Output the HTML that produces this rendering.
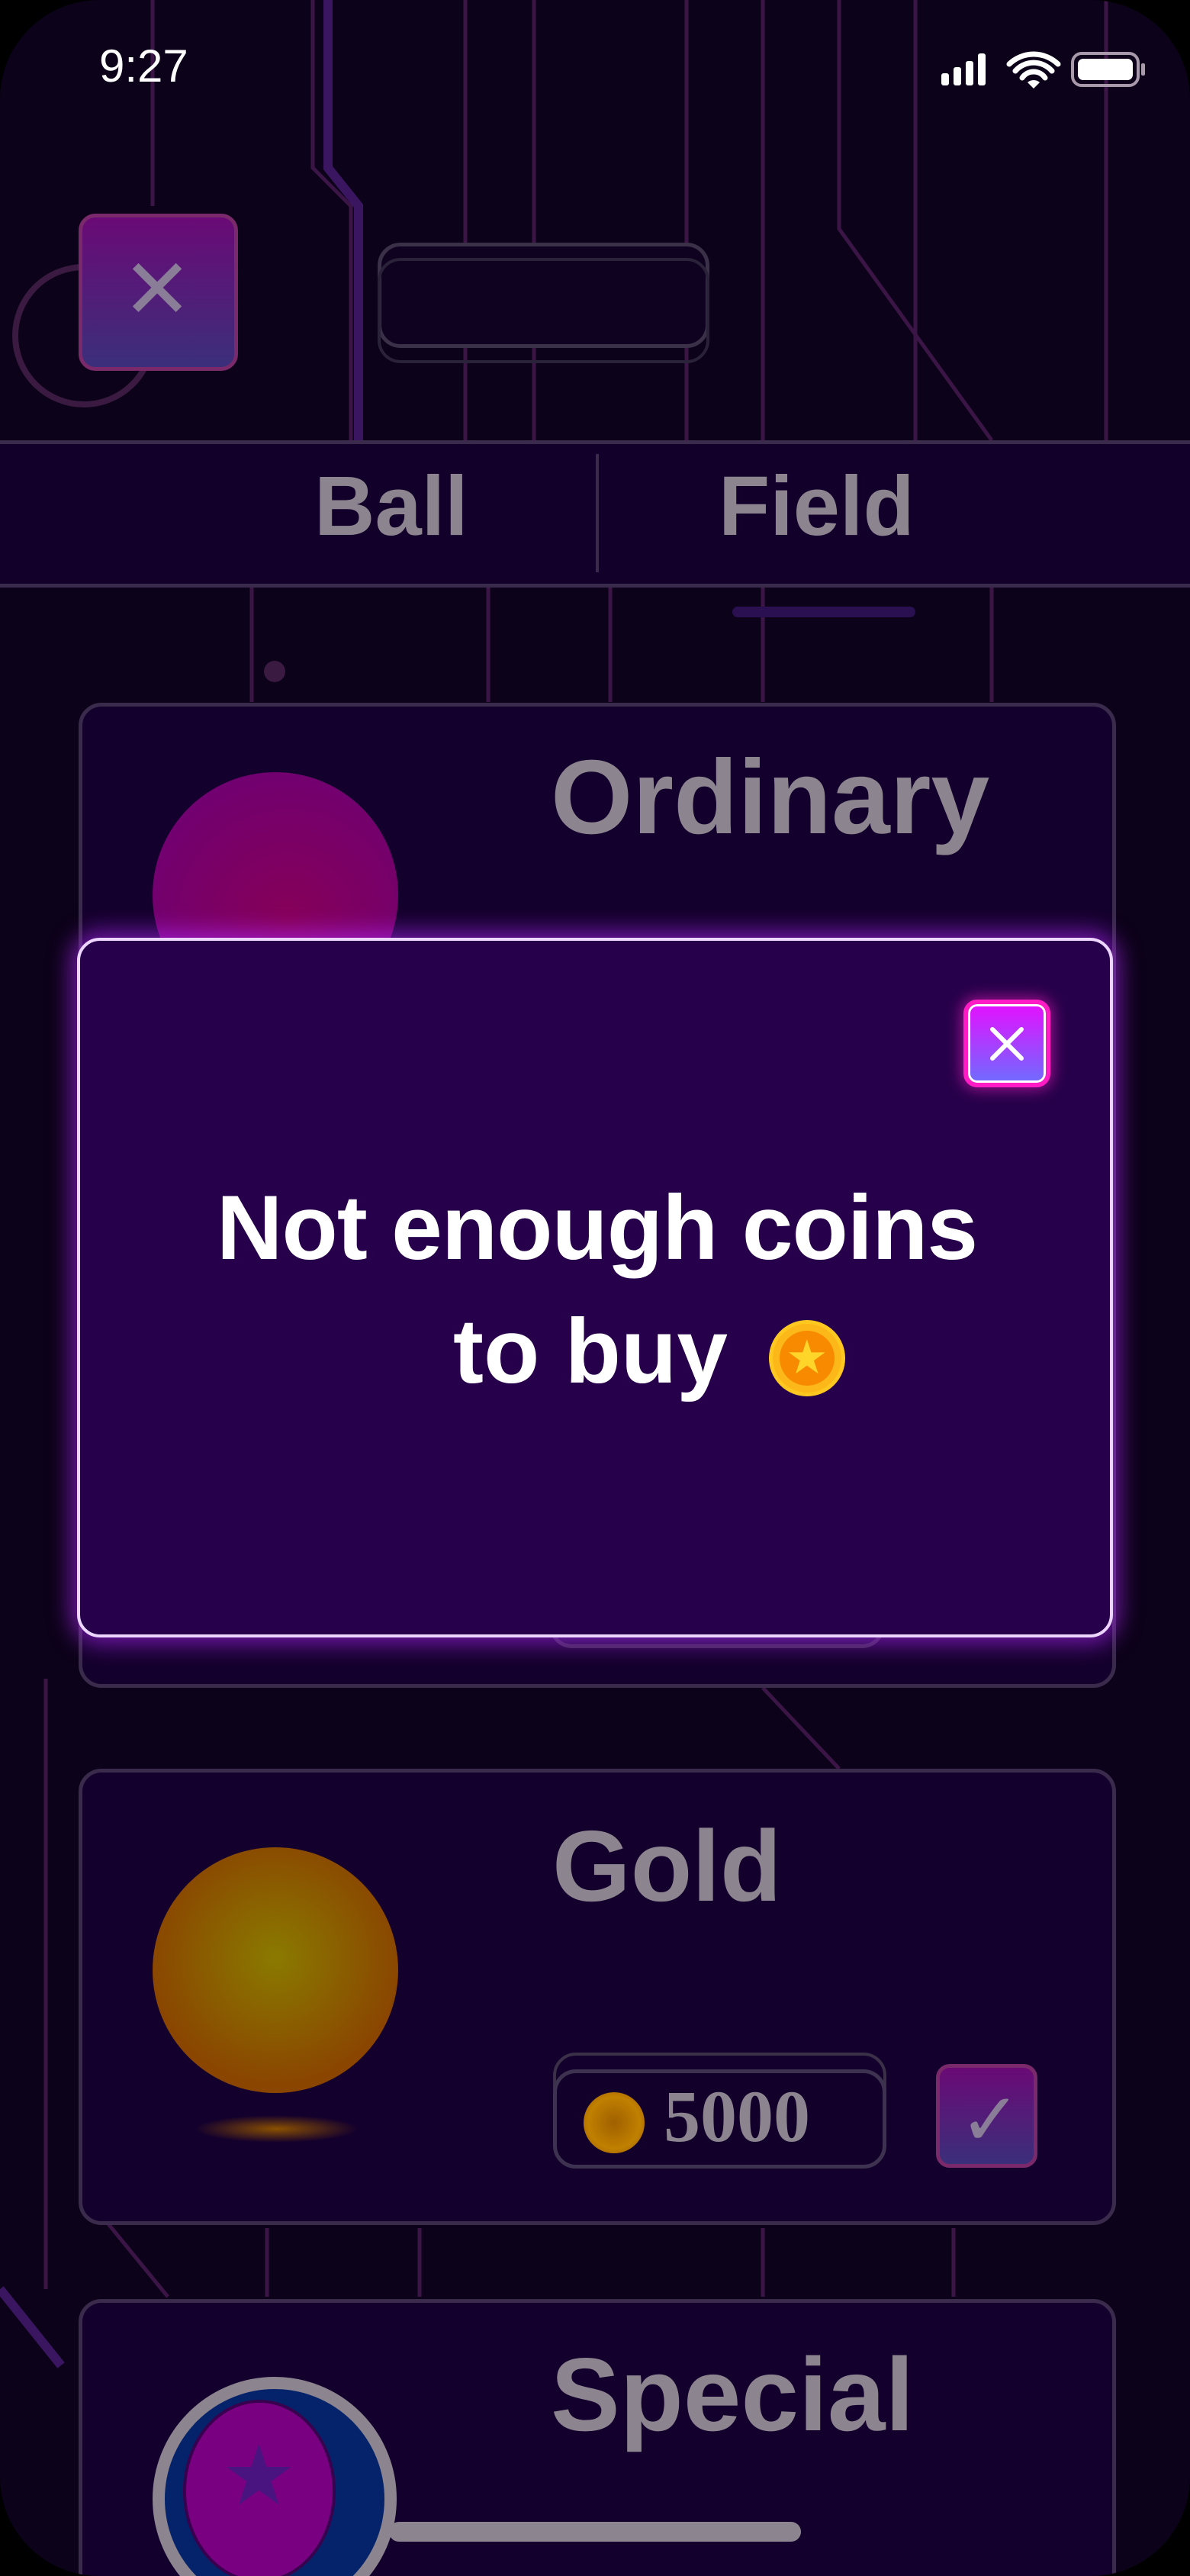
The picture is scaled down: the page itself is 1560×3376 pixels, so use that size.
<!DOCTYPE html>
<html><head><meta charset="utf-8"><style>
*{margin:0;padding:0;box-sizing:border-box}
html,body{width:1560px;height:3376px;background:#000;overflow:hidden;font-family:"Liberation Sans",sans-serif}
.scr{position:absolute;left:0;top:0;width:1560px;height:3376px;border-radius:130px;overflow:hidden;background:#0c0219}
.abs{position:absolute}
.card{position:absolute;left:103px;width:1360px;border:5px solid #3a2a4c;border-radius:30px;background:#14002c}
.gt{position:absolute;color:#8c8590;font-weight:bold;font-size:132px}
</style></head><body>
<div class="scr">
<svg class="abs" style="left:0;top:0" width="1560" height="3376">
<g fill="none" stroke="#3a1545" stroke-width="5">
<path d="M200 0V270M410 0V220L460 270V577M610 0V577M700 0V577M900 0V577M1000 0V577M1100 0V300L1300 577M1200 0V577M1450 0V577"/>
<path d="M330 770V920M640 770V920M800 770V920M1000 770V920M1300 770V920"/>
<path d="M60 2200V3000M130 2900L220 3010M350 2920V3010M550 2920V3010M1000 2920V3010M1250 2920V3010"/>
<path d="M1000 2212L1100 2318"/>
</g>
<g fill="none" stroke="#3b1660" stroke-width="12"><path d="M430 0V220L470 270V577"/><path d="M0 3000L80 3100"/></g>
<circle cx="110" cy="440" r="90" fill="none" stroke="#3a1a40" stroke-width="8"/>
<circle cx="1240" cy="1060" r="14" fill="#3a1a40"/><circle cx="360" cy="880" r="14" fill="#3a1a40"/>
<rect x="960" y="795" width="240" height="14" rx="7" fill="#2a1050"/>
</svg>
<div class="abs" style="left:0;top:577px;width:1560px;height:193px;background:#13002a;border-top:5px solid #3a2a4c;border-bottom:5px solid #3a2a4c"></div>
<div class="abs" style="left:781px;top:595px;width:4px;height:155px;background:#3a2a4c"></div>
<div class="gt" style="left:412px;top:600px;font-size:110px">Ball</div>
<div class="gt" style="left:942px;top:600px;font-size:110px">Field</div>
<div class="abs" style="left:103px;top:280px;width:209px;height:206px;border-radius:22px;border:5px solid #7a2a6a;background:linear-gradient(#6a0a76,#3b2f7a)"></div>
<div class="abs" style="left:160px;top:325px;color:#8a7d98;font-size:110px;line-height:110px">✕</div>
<div class="abs" style="left:495px;top:318px;width:435px;height:138px;border-radius:30px;border:5px solid #3a3048;background:#0f0120"></div>
<div class="abs" style="left:495px;top:338px;width:435px;height:138px;border-radius:30px;border:4px solid #2a2238"></div>
<div class="card" style="top:921px;height:1291px"></div>
<div class="gt" style="left:722px;top:966px;font-size:138px">Ordinary</div>
<div class="abs" style="left:200px;top:1012px;width:322px;height:322px;border-radius:50%;background:radial-gradient(circle at 55% 60%,#860058,#6a0078)"></div>
<div class="abs" style="left:720px;top:2100px;width:440px;height:60px;border-radius:30px;background:#1c0a3a;border:5px solid #3a2a4c"></div>
<div class="card" style="top:2318px;height:598px"></div>
<div class="gt" style="left:724px;top:2370px">Gold</div>
<div class="abs" style="left:200px;top:2421px;width:322px;height:322px;border-radius:50%;background:radial-gradient(circle at 50% 45%,#8a7a00,#8a4500 70%)"></div>
<div class="abs" style="left:255px;top:2772px;width:215px;height:36px;border-radius:50%;background:radial-gradient(#8a5000,rgba(138,80,0,0) 70%)"></div>
<div class="abs" style="left:725px;top:2690px;width:437px;height:134px;border-radius:30px;border:4px solid #3a3048"></div>
<div class="abs" style="left:725px;top:2712px;width:437px;height:130px;border-radius:30px;border:5px solid #3d3350;background:#13002a"></div>
<div class="abs" style="left:765px;top:2742px;width:80px;height:80px;border-radius:50%;background:radial-gradient(#a06000,#c08000 60%,#9a5a00)"></div>
<div class="abs" style="left:870px;top:2718px;color:#8c8590;font-weight:bold;font-size:96px;font-family:'Liberation Serif',serif">5000</div>
<div class="abs" style="left:1227px;top:2705px;width:133px;height:136px;border-radius:18px;border:5px solid #7a2a6a;background:linear-gradient(#6a0a76,#3b2f7a)"></div>
<div class="abs" style="left:1258px;top:2722px;color:#8a7d98;font-size:96px">✓</div>
<div class="card" style="top:3013px;height:500px"></div>
<div class="gt" style="left:722px;top:3060px;font-size:136px">Special</div>
<div class="abs" style="left:200px;top:3115px;width:320px;height:320px;border-radius:50%;border:16px solid #8c8590;background:#05236a"></div>
<div class="abs" style="left:240px;top:3145px;width:200px;height:240px;border-radius:50%;background:#7a0082;border:4px solid #3a0050"></div>
<div class="abs" style="left:290px;top:3180px;color:#4a1480;font-size:110px">★</div>
<div class="abs" style="left:510px;top:3305px;width:540px;height:26px;border-radius:13px;background:#8c8590"></div>

<!-- modal -->
<div class="abs" style="left:101px;top:1229px;width:1358px;height:917px;border-radius:30px;background:#26004a;border:4px solid #ecd6ff;box-shadow:0 0 30px 8px rgba(180,40,255,.6)"></div>
<div class="abs" style="left:1263px;top:1310px;width:114px;height:115px;border-radius:18px;border:6px solid #ff1cc4;background:linear-gradient(#e410ff,#6f6cff);box-shadow:0 0 18px 4px rgba(255,30,200,.5),inset 0 0 0 3px #fff"></div>
<svg class="abs" style="left:1295px;top:1343px" width="50" height="50"><path d="M6 6L44 44M44 6L6 44" stroke="#fff" stroke-width="6" stroke-linecap="round"/></svg>
<div class="abs" style="left:275px;top:1540px;width:1015px;text-align:center;color:#fff;font-weight:bold;font-size:120px;letter-spacing:-1px;white-space:nowrap">Not enough coins</div>
<div class="abs" style="left:594px;top:1702px;color:#fff;font-weight:bold;font-size:120px;letter-spacing:0px">to buy</div>
<div class="abs" style="left:1008px;top:1730px;width:100px;height:100px;border-radius:50%;background:#fbb818;border:5px solid #ffc820"></div>
<div class="abs" style="left:1022px;top:1744px;width:72px;height:72px;border-radius:50%;background:#f88a00"></div>
<div class="abs" style="left:1030px;top:1740px;color:#ffd52a;font-size:62px;line-height:80px">★</div>

<!-- status bar -->
<div class="abs" style="left:130px;top:52px;color:#fff;font-size:60px">9:27</div>
<svg class="abs" style="left:1230px;top:66px" width="310" height="50">
<rect x="4" y="30" width="10" height="16" rx="3" fill="#fff"/><rect x="20" y="22" width="10" height="24" rx="3" fill="#fff"/><rect x="36" y="14" width="10" height="32" rx="3" fill="#fff"/><rect x="52" y="4" width="10" height="42" rx="3" fill="#fff"/>
<path d="M93 18a46 46 0 0 1 64 0M101 27a32 32 0 0 1 48 0M110 36a18 18 0 0 1 30 0" stroke="#fff" stroke-width="7" fill="none" stroke-linecap="round"/><path d="M117 42l8 8 8-8a12 12 0 0 0-16 0z" fill="#fff"/>
<rect x="176" y="4" width="86" height="42" rx="12" fill="none" stroke="#a89aaa" stroke-width="4"/><rect x="183" y="11" width="72" height="28" rx="7" fill="#fff"/><rect x="266" y="17" width="5" height="16" rx="2" fill="#a89aaa"/>
</svg>
</div>
</body></html>
